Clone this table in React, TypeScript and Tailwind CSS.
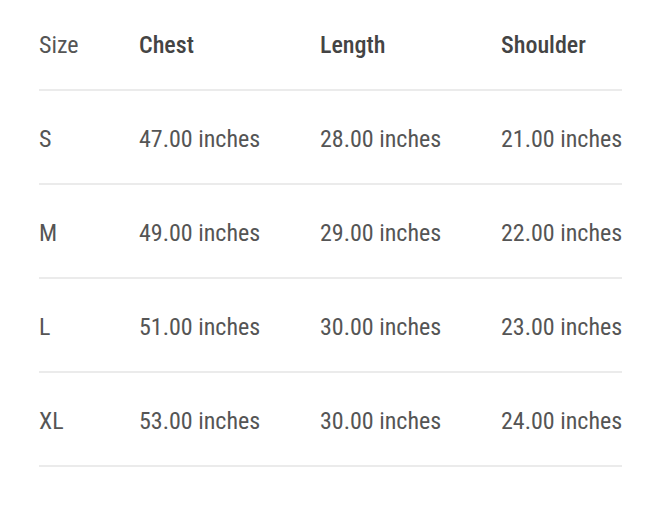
const rows = [
  ["S", "47.00 inches", "28.00 inches", "21.00 inches"],
  ["M", "49.00 inches", "29.00 inches", "22.00 inches"],
  ["L", "51.00 inches", "30.00 inches", "23.00 inches"],
  ["XL", "53.00 inches", "30.00 inches", "24.00 inches"],
];

export default function App() {
  return (
    <div className="min-h-screen bg-white px-[39px]" style={{ fontFamily: '"Roboto Condensed", Roboto, sans-serif' }}>
      <div className="w-[583px] text-[24px] text-[#555]">
        <div className="grid h-[91px] grid-cols-[100px_181px_181px_1fr] items-center border-b-2 border-[#ebebeb]">
          <div className="font-normal">Size</div>
          <div className="font-medium text-[#444]">Chest</div>
          <div className="font-medium text-[#444]">Length</div>
          <div className="font-medium text-[#444]">Shoulder</div>
        </div>
        {rows.map((r) => (
          <div key={r[0]} className="grid h-[94px] grid-cols-[100px_181px_181px_1fr] items-center border-b-2 border-[#ebebeb] pt-[4px]">
            {r.map((c, i) => (
              <div key={i} className="whitespace-nowrap">{c}</div>
            ))}
          </div>
        ))}
      </div>
    </div>
  );
}
